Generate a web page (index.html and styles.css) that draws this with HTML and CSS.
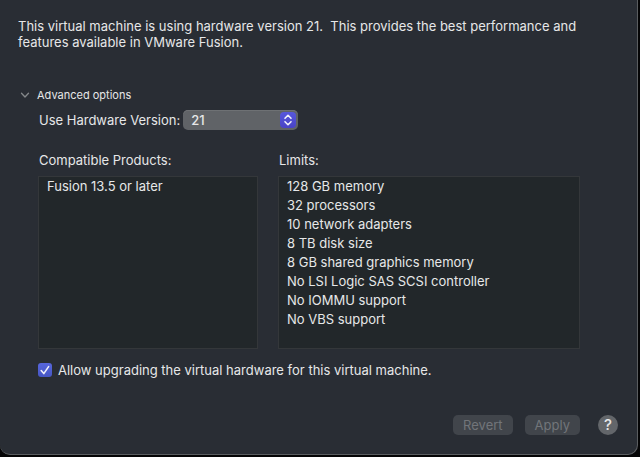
FILE: index.html
```html
<!DOCTYPE html>
<html lang="en">
  <head>
    <meta charset="UTF-8" />
    <meta name="viewport" content="width=device-width, initial-scale=1" />
    <title>Compatibility</title>
    <link rel="stylesheet" href="styles.css">
  </head>
  <body>
    <form class="window">
      <p class="intro">This virtual machine is using hardware version 21.&nbsp; This provides the best performance and features available in VMware Fusion.</p>
      <details class="advanced" open>
        <summary class="advanced-title">
          <svg class="chevron" width="10" height="10" viewBox="0 0 10 10" aria-hidden="true">
            <path d="M1.5 3.2 5 7l3.5-3.8" />
          </svg>
          Advanced options
        </summary>
        <div class="options">
          <div class="version">
            <label for="version">Use Hardware Version:</label>
            <div class="select-box">
              <select id="version">
                <option>21</option>
              </select>
              <svg class="arrows" width="16" height="16" viewBox="0 0 16 16" aria-hidden="true">
                <path d="M5 6.3 8 3.3l3 3M5 9.7l3 3 3-3" />
              </svg>
            </div>
          </div>
          <div class="columns">
            <section class="column">
              <h2 class="column-title">Compatible Products:</h2>
              <ul class="list">
                <li>Fusion 13.5 or later</li>
              </ul>
            </section>
            <section class="column">
              <h2 class="column-title">Limits:</h2>
              <ul class="list">
                <li>128 GB memory</li>
                <li>32 processors</li>
                <li>10 network adapters</li>
                <li>8 TB disk size</li>
                <li>8 GB shared graphics memory</li>
                <li>No LSI Logic SAS SCSI controller</li>
                <li>No IOMMU support</li>
                <li>No VBS support</li>
              </ul>
            </section>
          </div>
          <div class="allow">
            <span class="check-box">
              <input type="checkbox" id="allow" checked />
              <svg class="tick" width="14" height="14" viewBox="0 0 14 14" aria-hidden="true">
                <path d="M3.2 7.6 5.8 10.6 10.6 3.6" />
              </svg>
            </span>
            <label for="allow">Allow upgrading the virtual hardware for this virtual machine.</label>
          </div>
        </div>
      </details>
      <div class="footer">
        <button type="button" class="btn" disabled>Revert</button>
        <button type="button" class="btn" disabled>Apply</button>
        <button type="button" class="help" aria-label="Help">?</button>
      </div>
    </form>
  </body>
</html>
```
FILE: styles.css
```css
* {
  box-sizing: border-box;
}
body {
  margin: 0;
  background: #050506;
  color: #e6e7e8;
  font: 400 13px/16px Inter, "Liberation Sans", sans-serif;
  min-height: 100vh;
  padding: 0 2px 2px 0;
  display: flex;
}
.window {
  flex: 1;
  display: flex;
  flex-direction: column;
  background: #292d34;
  border: solid #5a5d60;
  border-width: 0 1px 1px 0;
  border-radius: 0 0 10px 10px;
  padding: 18px 19px 19px 18px;
}
.intro {
  margin: 0 10px 0 0;
}
.advanced {
  margin-top: 37px;
}
.advanced-title {
  display: flex;
  align-items: center;
  gap: 7px;
  padding-left: 2px;
  font-size: 11px;
  list-style: none;
}
.chevron path {
  fill: none;
  stroke: #85888b;
  stroke-width: 1.3;
  stroke-linecap: round;
  stroke-linejoin: round;
}
.advanced:not([open]) .chevron {
  transform: rotate(-90deg);
}
.options {
  padding: 7px 38px 0 20px;
}
.version {
  display: flex;
  align-items: center;
  gap: 3px;
  padding-left: 1px;
}
.select-box {
  position: relative;
}
.select-box select {
  appearance: none;
  display: block;
  width: 115px;
  height: 20px;
  padding: 0 24px 1px 8px;
  border: none;
  border-radius: 5px;
  background: #606367;
  box-shadow: inset 0 1px #6e7174;
  color: inherit;
  font: inherit;
  font-weight: 500;
}
.arrows {
  position: absolute;
  top: 2px;
  right: 2px;
  border-radius: 4px;
  background: linear-gradient(#5757db, #4943c6);
  pointer-events: none;
}
.arrows path,
.tick path {
  fill: none;
  stroke: #f0f0fa;
  stroke-width: 1.6;
  stroke-linecap: round;
  stroke-linejoin: round;
}
.columns {
  display: grid;
  grid-template-columns: 220fr 302fr;
  gap: 20px;
  margin-top: 22px;
}
.column {
  display: flex;
  flex-direction: column;
}
.column-title {
  margin: 0 0 8px;
  padding-left: 1px;
  font-size: 13px;
  font-weight: 400;
}
.list {
  flex: 1;
  margin: 0;
  padding: 0 8px 19px;
  list-style: none;
  line-height: 19px;
  background: #22272a;
  border: 1px solid #34373a;
}
.allow {
  display: flex;
  align-items: center;
  gap: 6px;
  margin-top: 13px;
}
.check-box {
  position: relative;
  display: flex;
}
.check-box input {
  appearance: none;
  width: 14px;
  height: 14px;
  margin: 0;
  border-radius: 3px;
  background: #606367;
}
.check-box input:checked {
  background: linear-gradient(#5766dc, #4656c4);
}
.tick {
  position: absolute;
  inset: 0;
  pointer-events: none;
}
.check-box input:not(:checked) + .tick {
  display: none;
}
.footer {
  display: flex;
  align-items: center;
  justify-content: flex-end;
  gap: 12px;
  margin-top: auto;
}
.btn {
  height: 20px;
  padding: 0 10px;
  border: none;
  border-radius: 5px;
  background: #41454b;
  color: #72757a;
  font: inherit;
}
.help {
  width: 20px;
  height: 20px;
  margin-left: 6px;
  padding: 0;
  border: none;
  border-radius: 50%;
  background: #63666a;
  color: #e8e8e9;
  font: inherit;
  font-size: 15px;
  font-weight: 500;
}
```
